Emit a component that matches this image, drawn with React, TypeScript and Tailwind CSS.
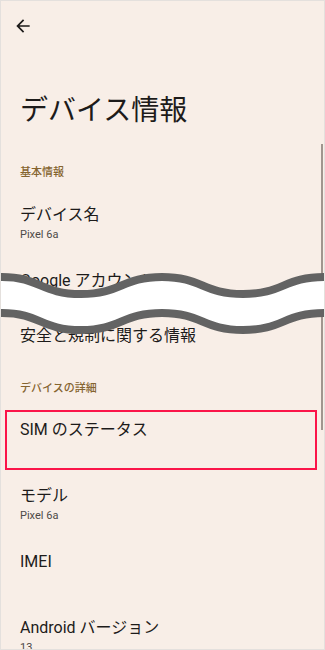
import React from "react";

const Item: React.FC<{ title: string; sub?: string; h?: string }> = ({ title, sub, h = "h-[66px]" }) => (
    <div className={`${h} pt-[9px] pl-[19px] shrink-0`}>
        <p className="text-[16px] leading-6 text-[#1d1b1a]">{title}</p>
        {sub && <p className="text-[11px] leading-4 text-[#4d4a48]">{sub}</p>}
    </div>
);

const Section: React.FC<{ label: string; className?: string }> = ({ label, className = "" }) => (
    <p className={`pl-[19px] text-[11px] leading-4 font-medium text-[#85642f] shrink-0 ${className}`}>{label}</p>
);

export default function App() {
    return (
        <div className="relative w-[325px] h-[650px] overflow-hidden bg-[#f8eee7] border border-[#e4e0dd] font-['Roboto','Noto_Sans_CJK_JP',sans-serif]">
            <div className="flex flex-col">
                <div className="h-[49px] flex items-center pl-[12px] shrink-0">
                    <svg width="20" height="20" viewBox="0 0 24 24" fill="#1d1b1a">
                        <path d="M20 11H7.83l5.59-5.59L12 4l-8 8 8 8 1.41-1.41L7.83 13H20v-2z" />
                    </svg>
                </div>
                <h1 className="mt-[43px] pl-[19px] text-[28px] leading-9 font-normal text-[#1d1b1a] shrink-0">デバイス情報</h1>

                <Section label="基本情報" className="mt-[36px]" />
                <div className="mt-[13px] flex flex-col">
                    <Item title="デバイス名" sub="Pixel 6a" />
                    <Item title="Google アカウント" h="h-[55px]" />
                    <Item title="安全と規制に関する情報" />
                </div>

                <Section label="デバイスの詳細" />
                <div className="mt-[12px] flex flex-col">
                    <div className="relative">
                        <Item title="SIM のステータス" />
                        <div className="absolute left-[4px] top-[1px] w-[312px] h-[60px] border-[2.5px] border-[#fb1449]" />
                    </div>
                    <Item title="モデル" sub="Pixel 6a" />
                    <Item title="IMEI" />
                    <Item title="Android バージョン" sub="13" />
                </div>
            </div>

            {/* scrollbar */}
            <div className="absolute left-[320px] top-[143px] w-[2px] h-[286px] bg-[#a0958e]" />

            {/* cut mark */}
            <svg className="absolute left-[-1px] top-[261px]" width="325" height="80" viewBox="0 0 325 80">
                <path
                    d="M0 15 C40 15 41 32 81 32 S122 15 162 15 S203 32 243 32 S284 15 325 15 L325 51 C284 51 283 68 243 68 C203 68 202 51 162 51 C122 51 121 68 81 68 C41 68 40 51 0 51 Z"
                    fill="#ffffff"
                />
                <path
                    d="M2 15 C40 15 41 32 81 32 S122 15 162 15 S203 32 243 32 S284 15 325 15"
                    fill="none"
                    stroke="#636363"
                    strokeWidth="8"
                    strokeLinecap="round"
                />
                <path
                    d="M2 51 C40 51 41 68 81 68 S122 51 162 51 S203 68 243 68 S284 51 325 51"
                    fill="none"
                    stroke="#636363"
                    strokeWidth="8"
                    strokeLinecap="round"
                />
            </svg>
        </div>
    );
}
